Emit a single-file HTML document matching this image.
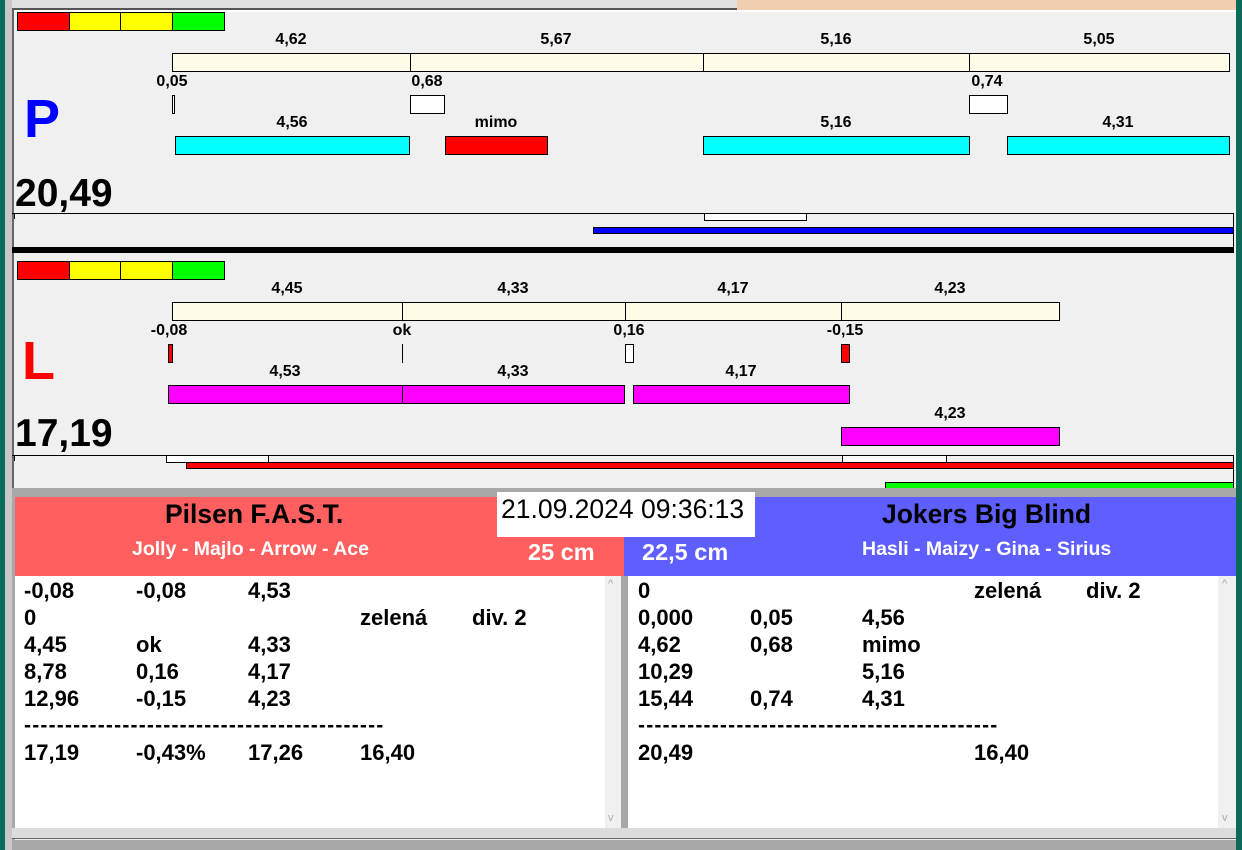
<!DOCTYPE html><html><head><meta charset="utf-8"><style>
*{margin:0;padding:0;box-sizing:border-box}
body{width:1242px;height:850px;overflow:hidden;background:#f0f0f0;position:relative;font-family:"Liberation Sans",Arial,sans-serif;font-weight:bold;color:#000}
div{position:absolute}
.b{border:1px solid #000}
.y{background:#fffde8;border:1px solid #000}
.lb{font-size:16px;text-align:center;width:120px;margin-left:-60px;line-height:18px}
.c{background:#00ffff;border:1px solid #000}
.m{background:#ff00ff;border:1px solid #000}
.r{background:#ff0000;border:1px solid #000}
.w{background:#fff;border:1px solid #000}
.t{font-size:22px;line-height:27px;white-space:pre}
.d{font-size:21px;line-height:27px;white-space:pre;letter-spacing:1.2px}
</style></head><body>
<div style="left:0;top:0;width:5px;height:850px;background:#0b6b5a"></div>
<div style="left:5px;top:0;width:7px;height:850px;background:#c8c8c8"></div>
<div style="left:1236px;top:0;width:6px;height:850px;background:#0b6b5a"></div>
<div style="left:12px;top:0;width:725px;height:10px;background:#e0e0e0;border-bottom:2px solid #555"></div>
<div style="left:737px;top:0;width:499px;height:11px;background:#efcfb0"></div>
<div style="left:12px;top:10px;width:1224px;height:2px;background:#fff"></div>
<div style="left:12px;top:10px;width:2px;height:480px;background:#666"></div>

<div class="b" style="left:17px;top:12px;width:53px;height:19px;background:#f00"></div>
<div class="b" style="left:69px;top:12px;width:52px;height:19px;background:#ff0"></div>
<div class="b" style="left:120px;top:12px;width:53px;height:19px;background:#ff0"></div>
<div class="b" style="left:172px;top:12px;width:53px;height:19px;background:#0f0"></div>

<div class="lb" style="left:291px;top:31px">4,62</div>
<div class="lb" style="left:556px;top:31px">5,67</div>
<div class="lb" style="left:836px;top:31px">5,16</div>
<div class="lb" style="left:1099px;top:31px">5,05</div>
<div class="y" style="left:172px;top:53px;width:239px;height:19px"></div>
<div class="y" style="left:410px;top:53px;width:294px;height:19px"></div>
<div class="y" style="left:703px;top:53px;width:267px;height:19px"></div>
<div class="y" style="left:969px;top:53px;width:261px;height:19px"></div>

<div class="lb" style="left:172px;top:73px">0,05</div>
<div class="lb" style="left:427px;top:73px">0,68</div>
<div class="lb" style="left:987px;top:73px">0,74</div>
<div class="w" style="left:172px;top:95px;width:3px;height:19px"></div>
<div class="w" style="left:410px;top:95px;width:35px;height:19px"></div>
<div class="w" style="left:969px;top:95px;width:39px;height:19px"></div>

<div style="left:24px;top:88px;font-size:54px;color:#0000ff;line-height:62px">P</div>
<div class="lb" style="left:292px;top:114px">4,56</div>
<div class="lb" style="left:496px;top:114px">mimo</div>
<div class="lb" style="left:836px;top:114px">5,16</div>
<div class="lb" style="left:1118px;top:114px">4,31</div>
<div class="c" style="left:175px;top:136px;width:235px;height:19px"></div>
<div class="r" style="left:445px;top:136px;width:103px;height:19px"></div>
<div class="c" style="left:703px;top:136px;width:267px;height:19px"></div>
<div class="c" style="left:1007px;top:136px;width:223px;height:19px"></div>

<div style="left:15px;top:172px;font-size:39px;line-height:44px">20,49</div>
<div style="left:12px;top:213px;width:1222px;height:35px;border-top:1px solid #000;border-right:1px solid #000"></div>
<div style="left:14px;top:213px;width:1px;height:6px;background:#000"></div>
<div class="w" style="left:704px;top:213px;width:103px;height:8px"></div>
<div style="left:593px;top:227px;width:641px;height:7px;background:#0000ff;border:1px solid #000"></div>
<div style="left:12px;top:247px;width:1222px;height:6px;background:#000"></div>

<div class="b" style="left:17px;top:261px;width:53px;height:19px;background:#f00"></div>
<div class="b" style="left:69px;top:261px;width:52px;height:19px;background:#ff0"></div>
<div class="b" style="left:120px;top:261px;width:53px;height:19px;background:#ff0"></div>
<div class="b" style="left:172px;top:261px;width:53px;height:19px;background:#0f0"></div>

<div class="lb" style="left:287px;top:280px">4,45</div>
<div class="lb" style="left:513px;top:280px">4,33</div>
<div class="lb" style="left:733px;top:280px">4,17</div>
<div class="lb" style="left:950px;top:280px">4,23</div>
<div class="y" style="left:172px;top:302px;width:231px;height:19px"></div>
<div class="y" style="left:402px;top:302px;width:224px;height:19px"></div>
<div class="y" style="left:625px;top:302px;width:217px;height:19px"></div>
<div class="y" style="left:841px;top:302px;width:219px;height:19px"></div>

<div class="lb" style="left:169px;top:322px">-0,08</div>
<div class="lb" style="left:402px;top:322px">ok</div>
<div class="lb" style="left:629px;top:322px">0,16</div>
<div class="lb" style="left:845px;top:322px">-0,15</div>
<div class="r" style="left:168px;top:344px;width:5px;height:19px"></div>
<div style="left:402px;top:344px;width:1px;height:19px;background:#000"></div>
<div class="w" style="left:625px;top:344px;width:9px;height:19px"></div>
<div class="r" style="left:841px;top:344px;width:9px;height:19px"></div>

<div style="left:22px;top:330px;font-size:54px;color:#ff0000;line-height:62px">L</div>
<div class="lb" style="left:285px;top:363px">4,53</div>
<div class="lb" style="left:513px;top:363px">4,33</div>
<div class="lb" style="left:741px;top:363px">4,17</div>
<div class="m" style="left:168px;top:385px;width:235px;height:19px"></div>
<div class="m" style="left:402px;top:385px;width:223px;height:19px"></div>
<div class="m" style="left:633px;top:385px;width:217px;height:19px"></div>
<div class="lb" style="left:950px;top:405px">4,23</div>
<div class="m" style="left:841px;top:427px;width:219px;height:19px"></div>

<div style="left:15px;top:412px;font-size:39px;line-height:44px">17,19</div>
<div style="left:12px;top:455px;width:1222px;height:34px;border-top:1px solid #000;border-right:1px solid #000"></div>
<div style="left:14px;top:455px;width:1px;height:6px;background:#000"></div>
<div class="w" style="left:166px;top:455px;width:103px;height:8px"></div>
<div class="w" style="left:842px;top:455px;width:105px;height:8px"></div>
<div style="left:186px;top:462px;width:1048px;height:7px;background:#f00;border:1px solid #000"></div>
<div style="left:885px;top:482px;width:349px;height:7px;background:#00ff00;border:1px solid #000"></div>

<div style="left:12px;top:488px;width:1224px;height:9px;background:#a8a8a8"></div>
<div style="left:12px;top:497px;width:3px;height:353px;background:#a8a8a8"></div>
<div style="left:15px;top:497px;width:609px;height:79px;background:#ff5f5f"></div>
<div style="left:624px;top:497px;width:612px;height:79px;background:#5f5fff"></div>
<div style="left:165px;top:498px;font-size:26.5px;line-height:32px">Pilsen F.A.S.T.</div>
<div style="left:132px;top:537px;font-size:19.5px;color:#fff;line-height:24px">Jolly - Majlo - Arrow - Ace</div>
<div style="left:528px;top:539px;font-size:23.5px;color:#fff;line-height:26px">25 cm</div>
<div style="left:642px;top:539px;font-size:23.5px;color:#fff;line-height:26px">22,5 cm</div>
<div style="left:882px;top:498px;font-size:26.5px;line-height:32px">Jokers Big Blind</div>
<div style="left:862px;top:537px;font-size:19.5px;color:#fff;line-height:24px">Hasli - Maizy - Gina - Sirius</div>
<div style="left:497px;top:492px;width:258px;height:45px;background:#fff;font-weight:normal;font-size:26.5px;line-height:34px;padding-left:4px;white-space:nowrap">21.09.2024 09:36:13</div>

<div style="left:15px;top:576px;width:590px;height:252px;background:#fff"></div>
<div style="left:605px;top:576px;width:16px;height:252px;background:#f0f0f0;color:#aaa;font-size:11px;text-align:center;font-weight:normal"><div style="left:3px;top:2px">^</div><div style="left:3px;top:236px">v</div></div>
<div style="left:621px;top:576px;width:7px;height:252px;background:#a8a8a8"></div>
<div style="left:628px;top:576px;width:590px;height:252px;background:#fff"></div>
<div style="left:1218px;top:576px;width:18px;height:252px;background:#f0f0f0;color:#aaa;font-size:11px;text-align:center;font-weight:normal"><div style="left:4px;top:2px">^</div><div style="left:4px;top:236px">v</div></div>
<div style="left:12px;top:828px;width:1224px;height:11px;background:#dcdcdc;border-bottom:1px solid #666"></div>
<div style="left:12px;top:840px;width:1224px;height:10px;background:#a8a8a8"></div>

<div class="t" style="left:24px;top:577px">-0,08</div><div class="t" style="left:136px;top:577px">-0,08</div><div class="t" style="left:248px;top:577px">4,53</div>
<div class="t" style="left:24px;top:604px">0</div><div class="t" style="left:360px;top:604px">zelená</div><div class="t" style="left:472px;top:604px">div. 2</div>
<div class="t" style="left:24px;top:631px">4,45</div><div class="t" style="left:136px;top:631px">ok</div><div class="t" style="left:248px;top:631px">4,33</div>
<div class="t" style="left:24px;top:658px">8,78</div><div class="t" style="left:136px;top:658px">0,16</div><div class="t" style="left:248px;top:658px">4,17</div>
<div class="t" style="left:24px;top:685px">12,96</div><div class="t" style="left:136px;top:685px">-0,15</div><div class="t" style="left:248px;top:685px">4,23</div>
<div class="d" style="left:24px;top:712px">--------------------------------------------</div>
<div class="t" style="left:24px;top:739px">17,19</div><div class="t" style="left:136px;top:739px">-0,43%</div><div class="t" style="left:248px;top:739px">17,26</div><div class="t" style="left:360px;top:739px">16,40</div>

<div class="t" style="left:638px;top:577px">0</div><div class="t" style="left:974px;top:577px">zelená</div><div class="t" style="left:1086px;top:577px">div. 2</div>
<div class="t" style="left:638px;top:604px">0,000</div><div class="t" style="left:750px;top:604px">0,05</div><div class="t" style="left:862px;top:604px">4,56</div>
<div class="t" style="left:638px;top:631px">4,62</div><div class="t" style="left:750px;top:631px">0,68</div><div class="t" style="left:862px;top:631px">mimo</div>
<div class="t" style="left:638px;top:658px">10,29</div><div class="t" style="left:862px;top:658px">5,16</div>
<div class="t" style="left:638px;top:685px">15,44</div><div class="t" style="left:750px;top:685px">0,74</div><div class="t" style="left:862px;top:685px">4,31</div>
<div class="d" style="left:638px;top:712px">--------------------------------------------</div>
<div class="t" style="left:638px;top:739px">20,49</div><div class="t" style="left:974px;top:739px">16,40</div>
</body></html>
